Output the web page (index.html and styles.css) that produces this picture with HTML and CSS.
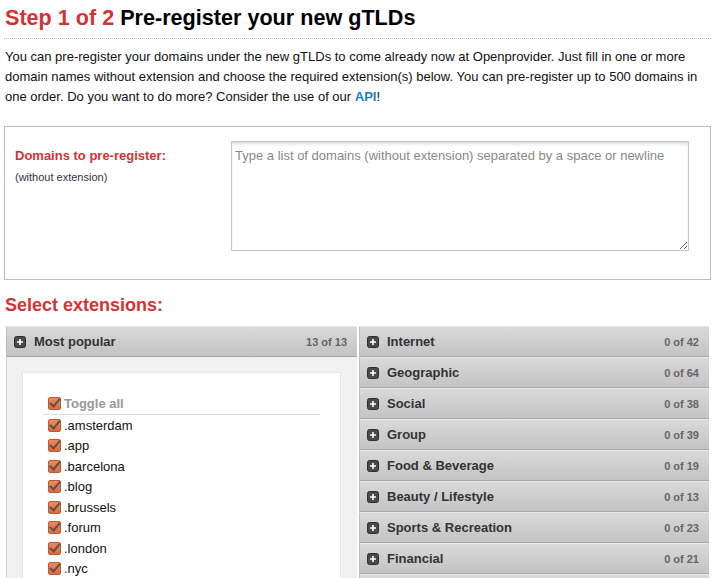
FILE: index.html
```html
<!DOCTYPE html>
<html>
<head>
<meta charset="utf-8">
<link rel="stylesheet" href="styles.css">
</head>
<body>
<div class="page">
  <h1 class="title"><span class="step">Step 1 of 2</span> Pre-register your new gTLDs</h1>
  <p class="intro">You can pre-register your domains under the new gTLDs to come already now at Openprovider. Just fill in one or more domain names without extension and choose the required extension(s) below. You can pre-register up to 500 domains in one order. Do you want to do more? Consider the use of our <a class="api" href="#">API</a>!</p>

  <div class="domains-box">
    <div class="label-col">
      <div class="label">Domains to pre-register:</div>
      <div class="sublabel">(without extension)</div>
    </div>
    <textarea class="domains" placeholder="Type a list of domains (without extension) separated by a space or newline"></textarea>
  </div>

  <h2 class="select-title">Select extensions:</h2>

  <div class="ext-grid">
    <div class="col">
      <div class="cat-head">
        <span class="plus"><svg width="12" height="12" viewBox="0 0 12 12"><rect x="0.5" y="0.5" width="11" height="11" rx="2" fill="#4a4a4a" stroke="#2e2e2e"/><path d="M6 3v6M3 6h6" stroke="#fff" stroke-width="1.6"/></svg></span>
        <span class="cat-name">Most popular</span>
        <span class="cat-count">13 of 13</span>
      </div>
      <div class="cat-body">
        <div class="inner">
          <ul class="ext-list">
            <li class="toggle"><span class="cb"></span>Toggle all</li>
            <li><span class="cb"></span>.amsterdam</li>
            <li><span class="cb"></span>.app</li>
            <li><span class="cb"></span>.barcelona</li>
            <li><span class="cb"></span>.blog</li>
            <li><span class="cb"></span>.brussels</li>
            <li><span class="cb"></span>.forum</li>
            <li><span class="cb"></span>.london</li>
            <li><span class="cb"></span>.nyc</li>
          </ul>
        </div>
      </div>
    </div>
    <div class="col">
      <div class="cat-head"><span class="plus"><svg width="12" height="12" viewBox="0 0 12 12"><rect x="0.5" y="0.5" width="11" height="11" rx="2" fill="#4a4a4a" stroke="#2e2e2e"/><path d="M6 3v6M3 6h6" stroke="#fff" stroke-width="1.6"/></svg></span><span class="cat-name">Internet</span><span class="cat-count">0 of 42</span></div>
      <div class="cat-head"><span class="plus"><svg width="12" height="12" viewBox="0 0 12 12"><rect x="0.5" y="0.5" width="11" height="11" rx="2" fill="#4a4a4a" stroke="#2e2e2e"/><path d="M6 3v6M3 6h6" stroke="#fff" stroke-width="1.6"/></svg></span><span class="cat-name">Geographic</span><span class="cat-count">0 of 64</span></div>
      <div class="cat-head"><span class="plus"><svg width="12" height="12" viewBox="0 0 12 12"><rect x="0.5" y="0.5" width="11" height="11" rx="2" fill="#4a4a4a" stroke="#2e2e2e"/><path d="M6 3v6M3 6h6" stroke="#fff" stroke-width="1.6"/></svg></span><span class="cat-name">Social</span><span class="cat-count">0 of 38</span></div>
      <div class="cat-head"><span class="plus"><svg width="12" height="12" viewBox="0 0 12 12"><rect x="0.5" y="0.5" width="11" height="11" rx="2" fill="#4a4a4a" stroke="#2e2e2e"/><path d="M6 3v6M3 6h6" stroke="#fff" stroke-width="1.6"/></svg></span><span class="cat-name">Group</span><span class="cat-count">0 of 39</span></div>
      <div class="cat-head"><span class="plus"><svg width="12" height="12" viewBox="0 0 12 12"><rect x="0.5" y="0.5" width="11" height="11" rx="2" fill="#4a4a4a" stroke="#2e2e2e"/><path d="M6 3v6M3 6h6" stroke="#fff" stroke-width="1.6"/></svg></span><span class="cat-name">Food &amp; Beverage</span><span class="cat-count">0 of 19</span></div>
      <div class="cat-head"><span class="plus"><svg width="12" height="12" viewBox="0 0 12 12"><rect x="0.5" y="0.5" width="11" height="11" rx="2" fill="#4a4a4a" stroke="#2e2e2e"/><path d="M6 3v6M3 6h6" stroke="#fff" stroke-width="1.6"/></svg></span><span class="cat-name">Beauty / Lifestyle</span><span class="cat-count">0 of 13</span></div>
      <div class="cat-head"><span class="plus"><svg width="12" height="12" viewBox="0 0 12 12"><rect x="0.5" y="0.5" width="11" height="11" rx="2" fill="#4a4a4a" stroke="#2e2e2e"/><path d="M6 3v6M3 6h6" stroke="#fff" stroke-width="1.6"/></svg></span><span class="cat-name">Sports &amp; Recreation</span><span class="cat-count">0 of 23</span></div>
      <div class="cat-head"><span class="plus"><svg width="12" height="12" viewBox="0 0 12 12"><rect x="0.5" y="0.5" width="11" height="11" rx="2" fill="#4a4a4a" stroke="#2e2e2e"/><path d="M6 3v6M3 6h6" stroke="#fff" stroke-width="1.6"/></svg></span><span class="cat-name">Financial</span><span class="cat-count">0 of 21</span></div>
      <div class="cat-head cat-tail"></div>
    </div>
  </div>
</div>
</body>
</html>
```

FILE: styles.css
```css
html, body {
  margin: 0;
  padding: 0;
  background: #fff;
}
body {
  font-family: "Liberation Sans", Arial, sans-serif;
  color: #111;
  font-size: 13px;
  height: 578px;
  overflow: hidden;
}
.page {
  width: 707px;
  padding: 0 3px 0 4px;
}
.title {
  margin: 0;
  padding: 6px 0 8px 1px;
  font-size: 21.6px;
  line-height: 24px;
  font-weight: bold;
  color: #000;
  border-bottom: 1px dotted #bbb;
}
.step {
  color: #d03434;
}
.intro {
  margin: 8px 0 0 1px;
  font-size: 13px;
  line-height: 20px;
  color: #111;
}
.api {
  color: #1a7ec0;
  font-weight: bold;
  text-decoration: none;
}
.domains-box {
  margin-top: 19px;
  border: 1px solid #bcbcbc;
  display: grid;
  grid-template-columns: 216px 458px;
  padding: 14px 22px 28px 10px;
}
.label {
  margin-top: 7px;
  color: #d03434;
  font-weight: bold;
  font-size: 13px;
  line-height: 16px;
}
.sublabel {
  margin-top: 6px;
  font-size: 11px;
  color: #334;
  line-height: 14px;
}
.domains {
  width: 458px;
  height: 110px;
  box-sizing: border-box;
  border: 1px solid #c4c4c4;
  box-shadow: inset 0 3px 4px -2px rgba(0,0,0,0.2);
  padding: 6px 3px;
  resize: vertical;
  font-family: "Liberation Sans", Arial, sans-serif;
  font-size: 13px;
  margin: 0;
}
.domains::placeholder {
  color: #888;
}
.select-title {
  margin: 13px 0 0 1px;
  font-size: 18px;
  line-height: 24px;
  color: #d03434;
  font-weight: bold;
}
.ext-grid {
  margin: 9px 3px 0 2px;
  display: grid;
  grid-template-columns: 351px 350px;
  column-gap: 2px;
}
.col {
  display: flex;
  flex-direction: column;
}
.cat-head {
  display: flex;
  align-items: center;
  height: 29px;
  padding: 0 10px 0 7px;
  background: linear-gradient(#d9d9d9, #c3c3c3);
  border-top: 1px solid #e8e8e8;
  border-bottom: 1px solid #a9a9a9;
  border-left: 1px solid #bdbdbd;
  flex-shrink: 0;
}
.plus {
  width: 12px;
  height: 12px;
  display: flex;
  margin-right: 8px;
}
.cat-name {
  flex: 1;
  font-weight: bold;
  font-size: 13px;
  color: #333;
}
.cat-count {
  font-weight: bold;
  font-size: 11px;
  color: #666;
}
.cat-body {
  background: #f0f0f0;
  border-left: 1px solid #d0d0d0;
  padding: 15px 16px 0 15px;
  height: 300px;
}
.inner {
  background: #fff;
  border: 1px solid #e6e6e6;
  padding: 20px 20px 0 20px;
  height: 280px;
}
.ext-list {
  list-style: none;
  margin: 0;
  padding: 0;
}
.ext-list li {
  display: flex;
  align-items: center;
  height: 20.5px;
  padding-left: 5px;
  font-size: 13px;
  color: #111;
}
.ext-list li.toggle {
  height: 21px;
  border-bottom: 1px solid #dcdcdc;
  font-weight: bold;
  color: #999;
}
.cb {
  width: 13px;
  height: 13px;
  margin-right: 3px;
  box-sizing: border-box;
  border: 1px solid #b85a35;
  border-radius: 2px;
  background: linear-gradient(#f0875a, #e06a3c);
  position: relative;
}
.cb::after {
  content: "";
  position: absolute;
  left: 3px;
  top: -2px;
  width: 4px;
  height: 9px;
  border-right: 2px solid #555;
  border-bottom: 2px solid #555;
  transform: rotate(40deg);
}
```
